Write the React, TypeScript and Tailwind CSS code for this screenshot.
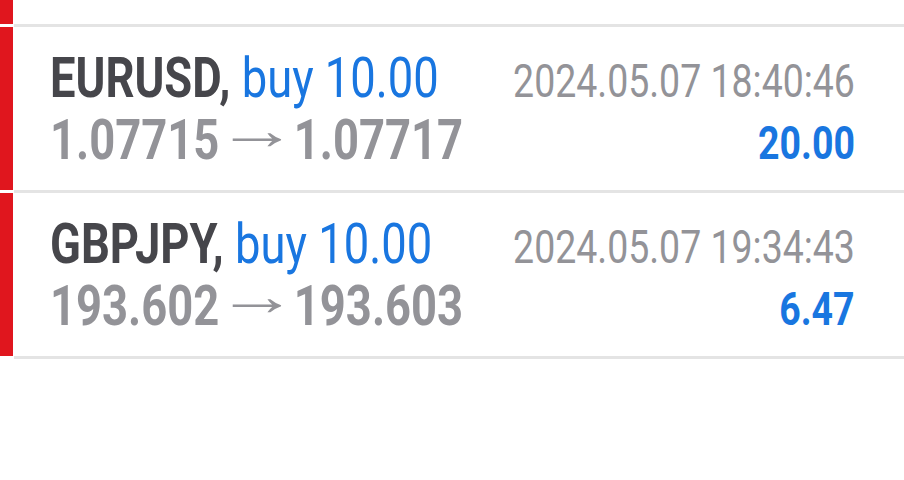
import React from 'react';

type Deal = {
  symbol: string;
  side: string;
  volume: string;
  open: string;
  close: string;
  time: string;
  profit: string;
};

const deals: Deal[] = [
  { symbol: 'EURUSD', side: 'buy', volume: '10.00', open: '1.07715', close: '1.07717', time: '2024.05.07 18:40:46', profit: '20.00' },
  { symbol: 'GBPJPY', side: 'buy', volume: '10.00', open: '193.602', close: '193.603', time: '2024.05.07 19:34:43', profit: '6.47' },
];

// The app renders Roboto condensed horizontally; we squeeze each text run instead.
const squeezeL = 'inline-block whitespace-nowrap origin-left scale-x-[0.81] [grid-area:1/1] justify-self-start';
const squeezeR = 'inline-block whitespace-nowrap origin-right scale-x-[0.814] [grid-area:1/1] justify-self-end';

const Divider = () => (
  <div className="flex h-[3px]">
    <div className="w-[14px] shrink-0 bg-white" />
    <div className="flex-1 bg-[#e4e4e4]" />
  </div>
);

const DealRow: React.FC<{ deal: Deal }> = ({ deal }) => (
  <div className="flex h-[163px]">
    <div className="w-[13px] shrink-0 bg-[#e0161e]" />
    <div className="flex-1 pl-[37px] pr-[49px] pt-[22px]">
      <div className="grid items-baseline leading-[59px]">
        <span className={`${squeezeL} text-[56px] font-bold text-[#46464b]`}>
          {deal.symbol},{' '}
          <span className="font-normal text-[#1976e0]">
            {deal.side} {deal.volume}
          </span>
        </span>
        <span className={`${squeezeR} text-[46px] text-[#939398]`}>{deal.time}</span>
      </div>
      <div className="grid items-baseline leading-[59px]">
        <span className={`${squeezeL} text-[56px] font-bold text-[#939398]`}>
          {deal.open}
          {/* long arrow: the glyph is stretched inside a box that holds the spacing */}
          <span className="inline-block w-[92px] text-center align-[10px] leading-[0]">
            <span className="inline-block scale-x-[1.8]">→</span>
          </span>
          {deal.close}
        </span>
        <span className={`${squeezeR} text-[46px] font-bold text-[#1976e0]`}>{deal.profit}</span>
      </div>
    </div>
  </div>
);

export default function App() {
  return (
    <div className="w-[904px] h-[480px] overflow-hidden bg-white font-['Roboto',sans-serif]">
      <div className="flex h-[24px]">
        <div className="w-[13px] shrink-0 bg-[#e0161e]" />
        <div className="flex-1" />
      </div>
      <Divider />
      {deals.map(d => (
        <React.Fragment key={d.symbol}>
          <DealRow deal={d} />
          <Divider />
        </React.Fragment>
      ))}
    </div>
  );
}
